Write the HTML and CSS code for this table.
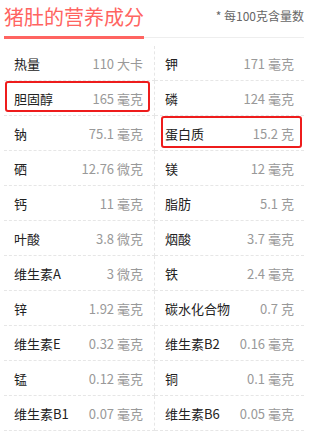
FILE: index.html
```html
<!DOCTYPE html>
<html lang="zh">
<head>
<meta charset="utf-8">
<link rel="stylesheet" href="styles.css">
</head>
<body>
<div class="panel">
  <div class="header">
    <h2 class="title">猪肚的营养成分</h2>
    <span class="note">* 每100克含量数</span>
  </div>
  <div class="grid">
    <div class="cell"><span class="name">热量</span><span class="val">110 大卡</span></div>
    <div class="cell"><span class="name">钾</span><span class="val">171 毫克</span></div>
    <div class="cell mark"><span class="name">胆固醇</span><span class="val">165 毫克</span></div>
    <div class="cell"><span class="name">磷</span><span class="val">124 毫克</span></div>
    <div class="cell"><span class="name">钠</span><span class="val">75.1 毫克</span></div>
    <div class="cell mark"><span class="name">蛋白质</span><span class="val">15.2 克</span></div>
    <div class="cell"><span class="name">硒</span><span class="val">12.76 微克</span></div>
    <div class="cell"><span class="name">镁</span><span class="val">12 毫克</span></div>
    <div class="cell"><span class="name">钙</span><span class="val">11 毫克</span></div>
    <div class="cell"><span class="name">脂肪</span><span class="val">5.1 克</span></div>
    <div class="cell"><span class="name">叶酸</span><span class="val">3.8 微克</span></div>
    <div class="cell"><span class="name">烟酸</span><span class="val">3.7 毫克</span></div>
    <div class="cell"><span class="name">维生素A</span><span class="val">3 微克</span></div>
    <div class="cell"><span class="name">铁</span><span class="val">2.4 毫克</span></div>
    <div class="cell"><span class="name">锌</span><span class="val">1.92 毫克</span></div>
    <div class="cell"><span class="name">碳水化合物</span><span class="val">0.7 克</span></div>
    <div class="cell"><span class="name">维生素E</span><span class="val">0.32 毫克</span></div>
    <div class="cell"><span class="name">维生素B2</span><span class="val">0.16 毫克</span></div>
    <div class="cell"><span class="name">锰</span><span class="val">0.12 毫克</span></div>
    <div class="cell"><span class="name">铜</span><span class="val">0.1 毫克</span></div>
    <div class="cell"><span class="name">维生素B1</span><span class="val">0.07 毫克</span></div>
    <div class="cell"><span class="name">维生素B6</span><span class="val">0.05 毫克</span></div>
  </div>
</div>
</body>
</html>
```
FILE: styles.css
```css
* { box-sizing: border-box; }
html, body { margin: 0; padding: 0; background: #fff; }
body {
  font-family: "Noto Sans CJK SC", "Open Sans", sans-serif;
  overflow: hidden;
}
.panel {
  width: 300px;
  margin-left: 4px;
}
.header {
  display: flex;
  justify-content: space-between;
  align-items: flex-end;
  height: 38px;
  border-bottom: 1px solid #eee;
}
.title {
  margin: 0 0 -2px 0;
  font-size: 20px;
  font-weight: normal;
  line-height: 26px;
  color: #ff6461;
  border-bottom: 3px solid #ff6461;
  padding-bottom: 6px;
}
.note {
  font-size: 12px;
  color: #666;
  line-height: 16px;
  padding-bottom: 13px;
}
.grid {
  display: grid;
  grid-template-columns: 151px 149px;
  margin-top: 8px;
}
.cell {
  position: relative;
  display: flex;
  justify-content: space-between;
  align-items: center;
  height: 35px;
  border-bottom: 1px dashed #e6e6e6;
  font-size: 13px;
  padding: 0 10px 0 10px;
}
.cell:nth-child(odd) {
  border-right: 1px dashed #e6e6e6;
  padding-right: 11px;
}
.name { color: #222; }
.val { color: #999; }
.cell.mark::after {
  content: "";
  position: absolute;
  left: 1px;
  top: 0;
  right: 4px;
  bottom: 3px;
  border: 2px solid #ee1c1c;
  border-radius: 3px;
}
.cell.mark:nth-child(even)::after {
  left: 6px;
  right: 2px;
  top: 0;
  bottom: 2px;
}
```
